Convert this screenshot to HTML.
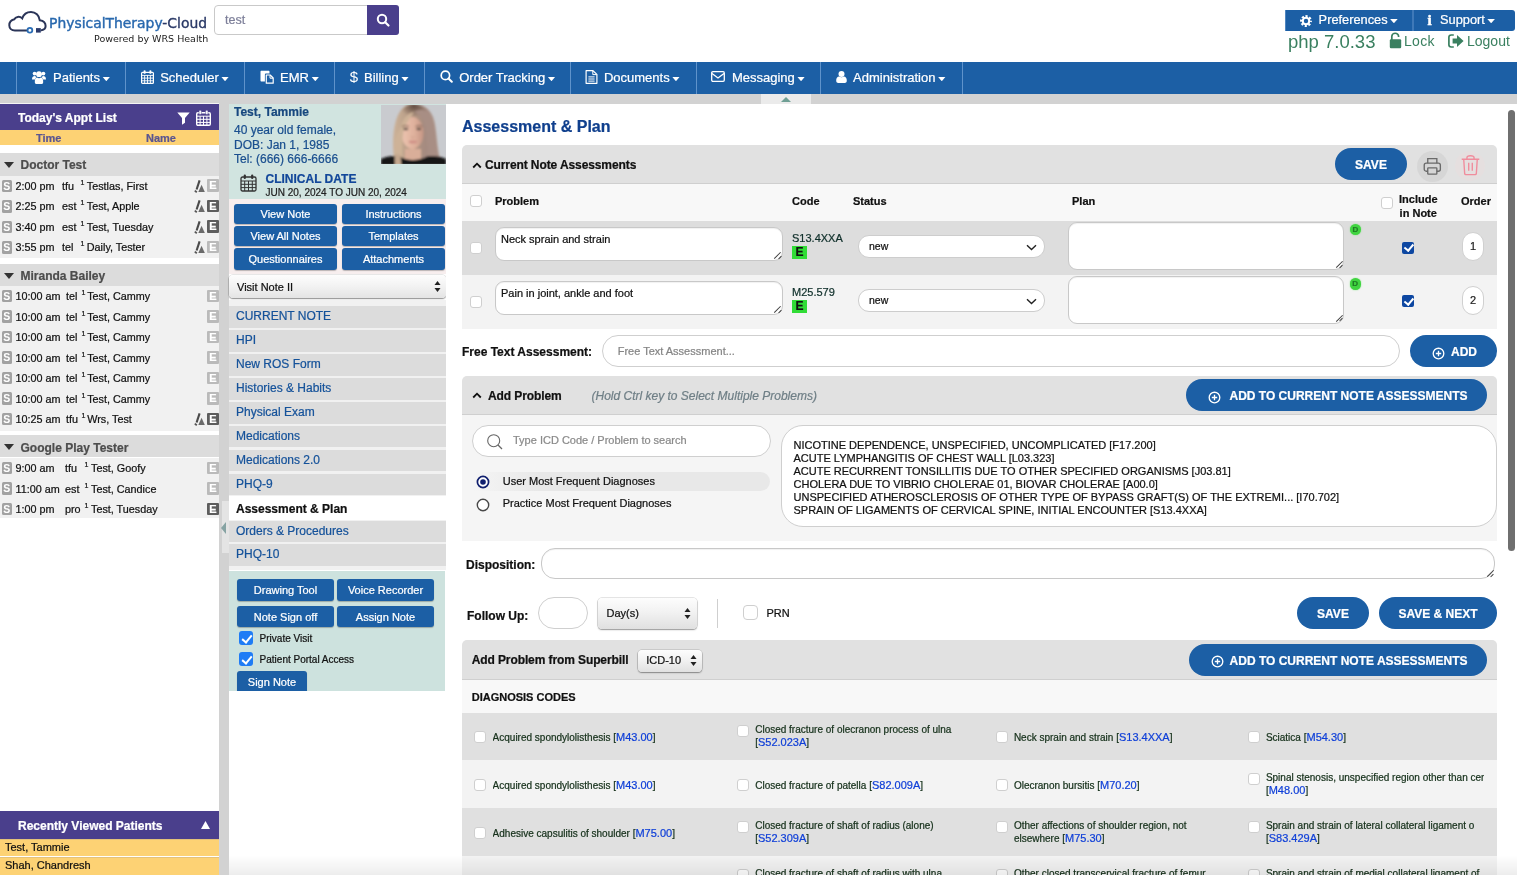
<!DOCTYPE html>
<html lang="en">
<head>
<meta charset="utf-8">
<title>PhysicalTherapy-Cloud - Assessment &amp; Plan</title>
<style>
*{box-sizing:border-box;margin:0;padding:0}
html,body{width:1523px;height:875px;overflow:hidden;background:#fff}
body>*{will-change:transform}
body{font-family:"Liberation Sans",Arial,Helvetica,sans-serif;font-size:12px;color:#111;position:relative;-webkit-text-stroke:0.22px currentColor}
.abs{position:absolute}
svg{display:block}
/* ---------- header ---------- */
#logo{position:absolute;left:0.8px;top:0;width:202px;height:40px}
#brand{position:absolute;left:49px;top:11.6px;font-family:'DejaVu Sans','Liberation Sans',sans-serif;font-size:13.9px;color:#2868ae;white-space:nowrap;line-height:22px;-webkit-text-stroke:0.4px #2868ae}
#brand b{font-weight:normal;color:#2b3a67;-webkit-text-stroke:0.35px #2b3a67}
#powered{position:absolute;left:93.7px;top:32px;font-family:'DejaVu Sans','Liberation Sans',sans-serif;font-size:9.5px;color:#222;white-space:nowrap;line-height:14px;-webkit-text-stroke:0}
#search{position:absolute;left:214px;top:5px;width:154px;height:30px;border:1px solid #c9c9c9;border-radius:4px 0 0 4px;background:#fff;font-size:12.5px;color:#7d7f99;line-height:28px;padding-left:10px}
#searchbtn{position:absolute;left:367px;top:5px;width:32px;height:30px;background:#4a3f8c;border-radius:0 3px 3px 0}
#pref{position:absolute;left:1285px;top:10px;width:230px;height:21px;background:#1c5fa5;border-radius:0 3px 3px 0;border-left:1px solid #4f86c0;color:#fff;font-size:12.8px;line-height:20.5px;white-space:nowrap}
#pref .sep{position:absolute;left:126px;top:0;width:2px;height:21px;background:#3f79b8}
#php{position:absolute;left:1288px;top:30px;font-size:18.5px;line-height:24px;color:#3a8060;white-space:nowrap;-webkit-text-stroke:0}
.toplink{position:absolute;top:32px;font-size:14px;line-height:18px;color:#3a8060;white-space:nowrap;-webkit-text-stroke:0}
/* ---------- nav ---------- */
#nav{position:absolute;left:0;top:62px;width:1517px;height:32px;background:#1c5fa5}
#nav{color:#fff;font-size:13px;line-height:31px;white-space:nowrap}
#nav .sp{position:absolute;top:0;width:1px;height:32px;background:#5f93cb}
#nav .t{position:absolute;top:0}
#nav .ni{position:absolute}
.caret{display:inline-block;width:7.6px;height:4.4px;background:#fff;clip-path:polygon(0 0,100% 0,50% 100%);vertical-align:middle;margin-left:2.5px;margin-top:1px}
#band{position:absolute;left:0;top:94px;width:1517px;height:10px;background:#d2d2d2}
#toggle{position:absolute;left:761px;top:94px;width:50px;height:10px;background:#ebebeb}
#toggle i{position:absolute;left:20px;top:3px;border-left:5px solid transparent;border-right:5px solid transparent;border-bottom:5px solid #6f9f94;width:0;height:0}
/* ---------- left sidebar ---------- */
#side{position:absolute;left:0;top:104px;width:219px;height:771px;background:#fff}
#gutter{position:absolute;left:219px;top:104px;width:10px;height:771px;background:#d2d2d2}
#appthead{position:absolute;left:0;top:0;width:219px;height:26px;background:#4a3f8c;color:#fff;font-weight:bold;font-size:12px;line-height:29.8px;padding-left:18px}
#apptcols{position:absolute;left:0;top:26px;width:219px;height:15px;background:#fdd274;color:#5a5590;font-weight:bold;font-size:11px;line-height:17px}
.grp{position:absolute;left:0;width:219px;height:23px;background:#dcdcdc;color:#4d4d4d;font-weight:bold;font-size:12px;line-height:24.5px;padding-left:20.5px}
.grp:before{content:"";position:absolute;left:4px;top:9px;border-left:5px solid transparent;border-right:5px solid transparent;border-top:6px solid #333}
.rbg{position:absolute;left:0;width:219px;background:#f1f1f1}
.row{position:absolute;left:0;width:219px;height:20px;font-size:10.8px;line-height:20px;color:#111;white-space:nowrap}
.row span{position:absolute;top:0}
.row sup{position:absolute;top:-3px;font-size:7px}
i{font-style:normal}
.si{position:absolute;left:1.5px;top:3.8px;width:10.4px;height:12.6px;background:#a2a2a2;border-radius:1.5px;color:#fff;font-weight:bold;font-size:10.5px;line-height:13px;text-align:center;-webkit-text-stroke:0}
.ei{position:absolute;left:207px;top:3.6px;width:12px;height:12.5px;background:#bababa;color:#fff;font-weight:bold;font-size:11px;line-height:13px;text-align:center;border-radius:1px}
.ei.d{background:#5d5d5d}
.ai{position:absolute;left:194px;top:4px;width:12px;height:13px}
#recent{position:absolute;left:0;top:707px;width:219px;height:28px;background:#4a3f8c;color:#fff;font-weight:bold;font-size:12px;line-height:30px;padding-left:18px}
.rv{position:absolute;left:0;width:219px;height:17px;background:#fdd274;font-size:11px;line-height:15.5px;padding-left:5px;color:#111;border-top:1px solid #e4c27a}

/* ---------- patient panel ---------- */
#pt{position:absolute;left:229px;top:104px;width:217px;height:95px;background:#d1e4e0}
#pt .nm{position:absolute;left:5px;top:0.7px;font-weight:bold;font-size:12px;line-height:15px;color:#17487f;white-space:nowrap}
#pt .ln{position:absolute;left:5px;font-size:12px;line-height:15px;color:#1a4f8f;white-space:nowrap}
#pt .cd{position:absolute;left:36.5px;top:67.5px;font-weight:bold;font-size:12px;line-height:14px;color:#12479a;white-space:nowrap}
#pt .dt{position:absolute;left:36.5px;top:82.6px;font-size:10px;line-height:12px;color:#222;white-space:nowrap}
#photo{position:absolute;left:381px;top:105px;width:65px;height:59px}
#btns{position:absolute;left:229px;top:199px;width:217px;height:75px;background:#f7eeee}
.bb{position:absolute;background:#1c5fa5;color:#fff;font-size:11px;line-height:21px;text-align:center;border-radius:3px;white-space:nowrap;box-shadow:0 1px 1px rgba(0,0,0,.25)}
#vsel{position:absolute;left:229px;top:275px;width:217px;height:23px;border-radius:4px;background:linear-gradient(#fdfdfd,#f2f2f2 50%,#e4e4e4);box-shadow:0 1px 1.5px rgba(0,0,0,.4),0 0 0 .6px rgba(0,0,0,.18);font-size:11px;line-height:25px;padding-left:8px;color:#111}
.ud{position:absolute;width:7px;height:11px}
#menu{position:absolute;left:229px;top:300px;width:218px;height:270px;background:#f1f1f1}
#menu div{position:absolute;left:0;width:218px;height:21.5px;background:#dcdcdc;color:#15529a;font-size:12px;line-height:21.2px;padding-left:7px;white-space:nowrap}
#menu div.act{background:#fff;color:#111;font-weight:bold;height:24px;line-height:26px}
#tools{position:absolute;left:229px;top:571px;width:216px;height:120px;background:#cde2de;overflow:hidden}
.cb{position:absolute;width:14px;height:14px;border-radius:3px;background:#1f7cf5}
.cb:after{content:"";position:absolute;left:4.5px;top:1.5px;width:4px;height:8px;border:solid #fff;border-width:0 2px 2px 0;transform:rotate(40deg)}
#tools .lb{position:absolute;left:30.6px;font-size:10px;line-height:15.4px;color:#111;white-space:nowrap}
#collapse{position:absolute;left:220.5px;top:521.5px;width:0;height:0;border-top:6px solid transparent;border-bottom:6px solid transparent;border-right:5.5px solid #86a3a3}

/* ---------- main ---------- */
#main{position:absolute;left:446px;top:104px;width:1071px;height:771px;background:#fff;overflow:hidden}
#main .abs{position:absolute}
h1{position:absolute;left:16px;top:12.8px;font-size:16px;line-height:20px;font-weight:bold;color:#0f3f8d;white-space:nowrap}
.sec{position:absolute;left:16px;width:1035px;background:#e1e1e1;border-radius:5px 5px 0 0;border-bottom:1px solid #cfcfcf}
.sec .tt{position:absolute;font-weight:bold;font-size:12px;color:#111;white-space:nowrap;line-height:16px;letter-spacing:-0.1px}
.band{position:absolute;left:16px;width:1035px}
.pill{position:absolute;background:#1c5fa5;color:#fff;font-weight:bold;font-size:12px;border-radius:16px;text-align:center;white-space:nowrap;letter-spacing:0}
.th{position:absolute;font-weight:bold;font-size:11px;line-height:14px;color:#111;white-space:nowrap;margin-top:-0.5px}
.ta{position:absolute;background:#fff;border:1px solid #c8c8c8;border-radius:9px;font-size:11px;line-height:14px;color:#111;padding:4px 5px;white-space:nowrap;box-shadow:inset 0 1px 1px rgba(0,0,0,.06)}
.ta:before{content:"";position:absolute;right:-0.6px;bottom:3.8px;width:8.8px;height:1.1px;background:#3c3c3c;transform:rotate(-45deg)}
.ta:after{content:"";position:absolute;right:-0.4px;bottom:2px;width:4.2px;height:1.1px;background:#3c3c3c;transform:rotate(-45deg)}
.ck{position:absolute;width:12px;height:12px;border:1px solid #cfcfcf;border-radius:3px;background:#fff}
.ckd{position:absolute;width:12px;height:12px;border-radius:2px;background:#0d47a1}
.ckd:after{content:"";position:absolute;left:3.8px;top:0.4px;width:3.5px;height:7px;border:solid #fff;border-width:0 2.1px 2.1px 0;transform:rotate(40deg)}
.code{position:absolute;font-size:11px;line-height:14px;color:#0f2f2a;white-space:nowrap}
.eb{position:absolute;width:15px;height:13px;background:#31dc36;color:#111;font-weight:bold;font-size:12px;line-height:13px;text-align:center}
.sel{position:absolute;height:22.6px;margin-top:-0.4px;background:#fff;border:1px solid #cdcdcd;border-radius:11px;font-size:10.5px;line-height:20px;color:#111;padding-left:10px}
.db{position:absolute;width:11.5px;height:11.5px;border-radius:6px;background:#40d440;color:#1f7a25;font-weight:bold;font-size:8px;line-height:12px;text-align:center;box-shadow:0 0 1.5px #6fe06f}
.ord{position:absolute;width:22.6px;height:29px;margin:-0.5px 0 0 -0.3px;border:1px solid #d0d0d0;border-radius:11.5px;background:#fff;font-size:11px;line-height:27px;text-align:center;color:#222}
.lbl{position:absolute;font-weight:bold;font-size:12px;line-height:16px;color:#111;white-space:nowrap;letter-spacing:0}
.inp{position:absolute;background:#fff;border:1px solid #cfcfcf;border-radius:16px;font-size:11px;color:#7a7a7a;white-space:nowrap}
.msel{position:absolute;border-radius:4px;background:linear-gradient(#fdfdfd,#f2f2f2 45%,#e0e0e0);box-shadow:0 1px 1.5px rgba(0,0,0,.35),0 0 0 .6px rgba(0,0,0,.2);font-size:11px;color:#111;white-space:nowrap}
.dx{position:absolute;font-size:10px;line-height:13px;color:#15301a;white-space:nowrap;overflow:hidden;margin-top:1.2px}
.dx a{font-size:11px;color:#0f3fd8;text-decoration:none;line-height:0}
#sb{position:absolute;left:1062px;top:6px;width:7px;height:441px;border-radius:4px;background:#6f6f6f}
</style>
</head>
<body>
<!-- header -->
<svg id="logo" viewBox="0 0 202 40">
  <path d="M25.5 30.5 H14 C10.5 30.5 8.3 28.3 8.3 25.3 C8.3 22.5 10.3 20 13.3 19.3 C14.5 16.7 18.6 15.8 21.2 18.4 C22.5 14.5 26 12 30 12 C34.5 12 38.3 15.5 38.8 20.3 C42 20.8 44.6 23 44.6 26 C44.6 28 43 29.8 40.5 30.3" fill="none" stroke="#2b3558" stroke-width="2" stroke-linecap="round"/>
  <circle cx="28.9" cy="30.2" r="2.4" fill="#fff" stroke="#2a6db5" stroke-width="1.8"/>
  <rect x="35" y="28.1" width="4.8" height="4.5" fill="#2b3a6b"/>
</svg>
<div id="brand">PhysicalTherapy<b>-Cloud</b></div>
<div id="powered">Powered by WRS Health</div>
<div id="search">test</div>
<div id="searchbtn"><svg width="32" height="30" viewBox="0 0 32 30"><circle cx="15" cy="14" r="4.2" fill="none" stroke="#fff" stroke-width="2"/><path d="M18.2 17.2 L21.5 20.5" stroke="#fff" stroke-width="2.2" stroke-linecap="round"/></svg></div>
<div id="pref">
  <svg class="abs" style="left:14px;top:4.5px" width="12" height="12" viewBox="0 0 16 16"><circle cx="8" cy="8" r="6.3" fill="none" stroke="#fff" stroke-width="3.2" stroke-dasharray="2.8 2.148" stroke-dashoffset="1.4"/><circle cx="8" cy="8" r="4.3" fill="none" stroke="#fff" stroke-width="2.7"/></svg>
  <span class="abs" style="left:32.6px;top:0">Preferences<i class="caret"></i></span>
  <div class="sep"></div>
  <span class="abs" style="left:141.6px;top:0;font-family:'Liberation Serif',serif;font-weight:bold;font-size:15px;-webkit-text-stroke:0.5px #fff">i</span>
  <span class="abs" style="left:154px;top:0">Support<i class="caret"></i></span>
</div>
<div id="php">php 7.0.33</div>
<svg class="abs" style="left:1389px;top:32px" width="13" height="17" viewBox="0 0 13 17"><path d="M2.8 8 V4.4 C2.8 0.2 9.6 0.2 9.6 4.4 V5" fill="none" stroke="#3a8060" stroke-width="1.7"/><rect x="0.8" y="7.3" width="11.4" height="8.9" rx="1.2" fill="#3a8060"/></svg>
<div class="toplink" style="left:1403.5px;letter-spacing:.3px">Lock</div>
<svg class="abs" style="left:1448px;top:34px" width="16" height="14" viewBox="0 0 16 14"><path d="M5.8 1 H3.2 C1.7 1 0.9 1.9 0.9 3.2 V10.8 C0.9 12.1 1.7 13 3.2 13 H5.8" fill="none" stroke="#3a8060" stroke-width="1.7"/><path d="M4.6 4.6 H9 V1 L15.6 7 L9 13 V9.4 H4.6 Z" fill="#3a8060"/></svg>
<div class="toplink" style="left:1467px">Logout</div>

<!-- nav -->
<div id="nav">
  <i class="sp" style="left:16.0px"></i>
  <svg class="ni" style="left:31.9px;top:7.5px" width="14" height="14" viewBox="0 0 14 14"><g fill="#fff"><circle cx="2.6" cy="3.6" r="1.9"/><circle cx="11.4" cy="3.6" r="1.9"/><path d="M0 9.5 C0 6.6 1.4 5.9 3.2 6 C3.6 6.6 4 7 4.4 7.2 C3.6 7.8 3.2 8.6 3.1 9.5 Z"/><path d="M14 9.5 C14 6.6 12.6 5.9 10.8 6 C10.4 6.6 10 7 9.6 7.2 C10.4 7.8 10.8 8.6 10.9 9.5 Z"/><circle cx="7" cy="4.2" r="2.9"/><path d="M2.9 13 C2.4 9.3 3.6 7.6 5 7.4 C6.2 8.4 7.8 8.4 9 7.4 C10.4 7.6 11.6 9.3 11.1 13 C10.8 13.7 10 14 9.4 14 H4.6 C4 14 3.2 13.7 2.9 13 Z"/></g></svg>
  <span class="t" style="left:53.0px">Patients<i class="caret"></i></span>
  <i class="sp" style="left:125.0px"></i>
  <svg class="ni" style="left:140.6px;top:7.5px" width="13" height="14" viewBox="0 0 13 14"><rect x="0.6" y="2.3" width="11.8" height="11.1" rx="1" fill="none" stroke="#fff" stroke-width="1.2"/><path d="M0.6 5.4 H12.4 M0.6 8.1 H12.4 M0.6 10.8 H12.4 M3.6 5.4 V13.4 M6.5 5.4 V13.4 M9.4 5.4 V13.4" stroke="#fff" stroke-width="0.9" fill="none"/><rect x="2.6" y="0.2" width="2" height="3.6" rx="0.9" fill="#fff"/><rect x="8.4" y="0.2" width="2" height="3.6" rx="0.9" fill="#fff"/></svg>
  <span class="t" style="left:160.2px">Scheduler<i class="caret"></i></span>
  <i class="sp" style="left:243.9px"></i>
  <svg class="ni" style="left:259.9px;top:7.5px" width="14" height="14" viewBox="0 0 14 14"><path d="M0.5 1.8 C0.5 1.2 0.9 0.8 1.5 0.8 H8.5 C9.1 0.8 9.5 1.2 9.5 1.8 V3.6 H6.2 C5.4 3.6 4.9 4.1 4.9 4.9 V11.6 H1.5 C0.9 11.6 0.5 11.2 0.5 10.6 Z" fill="#fff"/><path d="M6.3 5 H10.2 L13.2 8 V13.2 H6.3 Z" fill="none" stroke="#fff" stroke-width="1.2" stroke-linejoin="round"/><path d="M10 5.2 V8.2 H13" fill="none" stroke="#fff" stroke-width="1"/></svg>
  <span class="t" style="left:280.1px">EMR<i class="caret"></i></span>
  <i class="sp" style="left:333.7px"></i>
  <span class="ni" style="left:349.7px;top:0;font-size:15px;line-height:30.5px;-webkit-text-stroke:0">$</span>
  <span class="t" style="left:364.0px">Billing<i class="caret"></i></span>
  <i class="sp" style="left:424.0px"></i>
  <svg class="ni" style="left:440px;top:8.0px" width="13" height="13" viewBox="0 0 13 13"><circle cx="5.4" cy="5.4" r="4.2" fill="none" stroke="#fff" stroke-width="1.7"/><path d="M8.5 8.5 L11.8 11.8" stroke="#fff" stroke-width="2" stroke-linecap="round"/></svg>
  <span class="t" style="left:459.2px">Order Tracking<i class="caret"></i></span>
  <i class="sp" style="left:570.2px"></i>
  <svg class="ni" style="left:584.8px;top:7.5px" width="13" height="14" viewBox="0 0 13 14"><path d="M1.1 0.7 H8 L11.9 4.4 V13.3 H1.1 Z" fill="none" stroke="#fff" stroke-width="1.2" stroke-linejoin="round"/><path d="M7.8 0.9 V4.6 H11.7 M3.4 6.9 H9.6 M3.4 9 H9.6 M3.4 11.1 H9.6" fill="none" stroke="#fff" stroke-width="1"/></svg>
  <span class="t" style="left:603.9px">Documents<i class="caret"></i></span>
  <i class="sp" style="left:696.1px"></i>
  <svg class="ni" style="left:711px;top:9.0px" width="14" height="11" viewBox="0 0 14 11"><rect x="0.7" y="0.7" width="12.6" height="9.6" rx="1.2" fill="none" stroke="#fff" stroke-width="1.3"/><path d="M1 2.6 L7 7 L13 2.6" fill="none" stroke="#fff" stroke-width="1.3"/></svg>
  <span class="t" style="left:731.9px">Messaging<i class="caret"></i></span>
  <i class="sp" style="left:820.3px"></i>
  <svg class="ni" style="left:835.6px;top:8.5px" width="11" height="12" viewBox="0 0 11 12"><circle cx="5.5" cy="3" r="3" fill="#fff"/><path d="M0.2 10 C0 7 1.4 5.4 3.1 5.4 C4.5 6.5 6.5 6.5 7.9 5.4 C9.6 5.4 11 7 10.8 10 C10.7 11.2 9.9 12 8.8 12 H2.2 C1.1 12 0.3 11.2 0.2 10 Z" fill="#fff"/></svg>
  <span class="t" style="left:853.1px">Administration<i class="caret"></i></span>
  <i class="sp" style="left:962.0px"></i>
</div>
<div id="band"></div>
<div id="toggle"><i></i></div>

<!-- SIDEBAR -->
<div id="side">
  <div id="appthead">Today's Appt List<svg class="abs" style="left:177px;top:8px" width="13" height="13" viewBox="0 0 13 13"><path d="M0.3 0.5 H12.7 L8 6 V10.8 L5 12.8 V6 Z" fill="#fff"/></svg><svg class="abs" style="left:196px;top:6px" width="15" height="16" viewBox="0 0 15 16"><rect x="0.7" y="2.7" width="13.6" height="12.6" rx="1.2" fill="none" stroke="#fff" stroke-width="1.4"/><path d="M0.7 6.2 H14.3 M0.7 9.3 H14.3 M0.7 12.4 H14.3 M4.1 6.2 V15.3 M7.5 6.2 V15.3 M10.9 6.2 V15.3" stroke="#fff" stroke-width="1" fill="none"/><rect x="3" y="0.2" width="2.4" height="4.3" rx="1.1" fill="#fff" stroke="#4a3f8c" stroke-width="0.5"/><rect x="9.6" y="0.2" width="2.4" height="4.3" rx="1.1" fill="#fff" stroke="#4a3f8c" stroke-width="0.5"/></svg></div>
  <div id="apptcols"><span class="abs" style="left:36px">Time</span><span class="abs" style="left:146px">Name</span></div>
<!--SR0-->
  <div class="grp" style="top:49.2px;height:22.8px">Doctor Test</div>
  <div class="rbg" style="top:72.0px;height:82.2px"></div>
  <div class="row" style="top:71.8px"><i class="si">S</i><span style="left:15.6px">2:00 pm</span><span style="left:62px">tfu</span><sup style="left:80.6px">1</sup><span style="left:86.8px">Testlas, First</span><svg class="ai" viewBox="0 0 12 13"><path d="M5.6 0.3 L2.6 9.5" stroke="#4a4a4a" stroke-width="2.1" fill="none"/><path d="M7.6 4.8 L10.8 12 H4.3 Z" fill="#6a6a6a"/><path d="M0.8 10.6 L2.8 12.2" stroke="#555" stroke-width="1.8"/></svg><i class="ei">E</i></div>
  <div class="row" style="top:92.3px"><i class="si">S</i><span style="left:15.6px">2:25 pm</span><span style="left:62px">est</span><sup style="left:80.6px">1</sup><span style="left:86.8px">Test, Apple</span><svg class="ai" viewBox="0 0 12 13"><path d="M5.6 0.3 L2.6 9.5" stroke="#4a4a4a" stroke-width="2.1" fill="none"/><path d="M7.6 4.8 L10.8 12 H4.3 Z" fill="#6a6a6a"/><path d="M0.8 10.6 L2.8 12.2" stroke="#555" stroke-width="1.8"/></svg><i class="ei d">E</i></div>
  <div class="row" style="top:112.8px"><i class="si">S</i><span style="left:15.6px">3:40 pm</span><span style="left:62px">est</span><sup style="left:80.6px">1</sup><span style="left:86.8px">Test, Tuesday</span><svg class="ai" viewBox="0 0 12 13"><path d="M5.6 0.3 L2.6 9.5" stroke="#4a4a4a" stroke-width="2.1" fill="none"/><path d="M7.6 4.8 L10.8 12 H4.3 Z" fill="#6a6a6a"/><path d="M0.8 10.6 L2.8 12.2" stroke="#555" stroke-width="1.8"/></svg><i class="ei d">E</i></div>
  <div class="row" style="top:133.3px"><i class="si">S</i><span style="left:15.6px">3:55 pm</span><span style="left:62px">tel</span><sup style="left:80.6px">1</sup><span style="left:86.8px">Daily, Tester</span><svg class="ai" viewBox="0 0 12 13"><path d="M5.6 0.3 L2.6 9.5" stroke="#4a4a4a" stroke-width="2.1" fill="none"/><path d="M7.6 4.8 L10.8 12 H4.3 Z" fill="#6a6a6a"/><path d="M0.8 10.6 L2.8 12.2" stroke="#555" stroke-width="1.8"/></svg><i class="ei">E</i></div>
  <div class="grp" style="top:160.0px;height:22px">Miranda Bailey</div>
  <div class="rbg" style="top:182.0px;height:145.0px"></div>
  <div class="row" style="top:182.1px"><i class="si">S</i><span style="left:15.6px">10:00 am</span><span style="left:66px">tel</span><sup style="left:81.6px">1</sup><span style="left:87.2px">Test, Cammy</span><i class="ei">E</i></div>
  <div class="row" style="top:202.6px"><i class="si">S</i><span style="left:15.6px">10:00 am</span><span style="left:66px">tel</span><sup style="left:81.6px">1</sup><span style="left:87.2px">Test, Cammy</span><i class="ei">E</i></div>
  <div class="row" style="top:223.1px"><i class="si">S</i><span style="left:15.6px">10:00 am</span><span style="left:66px">tel</span><sup style="left:81.6px">1</sup><span style="left:87.2px">Test, Cammy</span><i class="ei">E</i></div>
  <div class="row" style="top:243.6px"><i class="si">S</i><span style="left:15.6px">10:00 am</span><span style="left:66px">tel</span><sup style="left:81.6px">1</sup><span style="left:87.2px">Test, Cammy</span><i class="ei">E</i></div>
  <div class="row" style="top:264.1px"><i class="si">S</i><span style="left:15.6px">10:00 am</span><span style="left:66px">tel</span><sup style="left:81.6px">1</sup><span style="left:87.2px">Test, Cammy</span><i class="ei">E</i></div>
  <div class="row" style="top:284.6px"><i class="si">S</i><span style="left:15.6px">10:00 am</span><span style="left:66px">tel</span><sup style="left:81.6px">1</sup><span style="left:87.2px">Test, Cammy</span><i class="ei">E</i></div>
  <div class="row" style="top:305.1px"><i class="si">S</i><span style="left:15.6px">10:25 am</span><span style="left:66px">tfu</span><sup style="left:81.6px">1</sup><span style="left:87.2px">Wrs, Test</span><svg class="ai" viewBox="0 0 12 13"><path d="M5.6 0.3 L2.6 9.5" stroke="#4a4a4a" stroke-width="2.1" fill="none"/><path d="M7.6 4.8 L10.8 12 H4.3 Z" fill="#6a6a6a"/><path d="M0.8 10.6 L2.8 12.2" stroke="#555" stroke-width="1.8"/></svg><i class="ei d">E</i></div>
  <div class="grp" style="top:330.8px;height:22.7px;line-height:26.4px">Google Play Tester</div>
  <div class="rbg" style="top:353.5px;height:60.5px"></div>
  <div class="row" style="top:354.1px"><i class="si">S</i><span style="left:15.6px">9:00 am</span><span style="left:65px">tfu</span><sup style="left:84.6px">1</sup><span style="left:91px">Test, Goofy</span><i class="ei">E</i></div>
  <div class="row" style="top:374.6px"><i class="si">S</i><span style="left:15.6px">11:00 am</span><span style="left:65px">est</span><sup style="left:84.6px">1</sup><span style="left:91px">Test, Candice</span><i class="ei">E</i></div>
  <div class="row" style="top:395.1px"><i class="si">S</i><span style="left:15.6px">1:00 pm</span><span style="left:65px">pro</span><sup style="left:84.6px">1</sup><span style="left:91px">Test, Tuesday</span><i class="ei d">E</i></div>
<!--SR1-->
  <div id="recent">Recently Viewed Patients<svg class="abs" style="left:201px;top:10px" width="9" height="8" viewBox="0 0 9 8"><path d="M4.5 0 L9 8 H0 Z" fill="#fff"/></svg></div>
  <div class="rv" style="top:735px">Test, Tammie</div>
  <div class="rv" style="top:753px;height:18px">Shah, Chandresh</div>
</div>
<div id="gutter"></div>
<div style="position:absolute;left:0;top:103px;width:219px;height:1px;background:#f4f4f4"></div>
<div id="pt">
  <div class="nm">Test, Tammie</div>
  <div class="ln" style="top:18.8px">40 year old female,</div>
  <div class="ln" style="top:33.5px">DOB: Jan 1, 1985</div>
  <div class="ln" style="top:48.4px">Tel: (666) 666-6666</div>
  <svg class="abs" style="left:11px;top:70px" width="17" height="18" viewBox="0 0 17 18"><rect x="1" y="3" width="15" height="14" rx="1.5" fill="none" stroke="#333" stroke-width="1.3"/><path d="M1 7 H16 M1 10.3 H16 M1 13.6 H16 M4.7 7 V17 M8.5 7 V17 M12.3 7 V17" stroke="#333" stroke-width="1"/><rect x="3.7" y="0.5" width="2.2" height="4.5" rx="1" fill="#333"/><rect x="11.1" y="0.5" width="2.2" height="4.5" rx="1" fill="#333"/></svg>
  <div class="cd">CLINICAL DATE</div>
  <div class="dt">JUN 20, 2024 TO JUN 20, 2024</div>
</div>
<svg id="photo" viewBox="0 0 65 59" preserveAspectRatio="none">
  <defs>
    <linearGradient id="hg" x1="0" y1="0" x2="1" y2="0"><stop offset="0" stop-color="#cdb399"/><stop offset=".4" stop-color="#b39883"/><stop offset=".7" stop-color="#a48a80"/><stop offset="1" stop-color="#b39a8c"/></linearGradient>
    <radialGradient id="rt" cx="0.5" cy="0.1" r="0.6"><stop offset="0" stop-color="#5f4a40"/><stop offset="1" stop-color="#5f4a40" stop-opacity="0"/></radialGradient>
    <linearGradient id="fg" x1="0" y1="0" x2="1" y2="0"><stop offset="0" stop-color="#ecc4b0"/><stop offset=".6" stop-color="#deb09b"/><stop offset="1" stop-color="#c49584"/></linearGradient>
    <filter id="bl" x="-20%" y="-20%" width="140%" height="140%"><feGaussianBlur stdDeviation="1"/></filter>
  </defs>
  <rect width="65" height="59" fill="#c9cbcf"/>
  <g filter="url(#bl)">
    <path d="M14 60 C11 44 11 22 17 10 C22 0 27 -1 33 -1 C42 -1 48 3 52 12 C56 22 55 38 59 54 L59 60 Z" fill="url(#hg)"/>
    <ellipse cx="33" cy="8" rx="12" ry="9" fill="url(#rt)"/>
    <path d="M24 44 H40 V56 H24 Z" fill="#d9ae99"/>
    <ellipse cx="31.5" cy="28" rx="11" ry="16" fill="url(#fg)"/>
    <path d="M20 22 C22 12 28 8 33 7 C30 12 26 16 23 24 C21 32 21 44 22 60 H14 C12 46 13 32 20 22 Z" fill="#ceb297"/>
    <path d="M33 7 C40 9 44 16 45 26 C46 38 47 48 50 56 L58 56 C55 42 56 24 50 12 C46 5 40 3 33 7 Z" fill="#a88e84"/>
    <path d="M0 60 V54 C5 51.5 12 50.5 19 51.5 C25 56 38 56 46 51.5 C53 50.5 60 51.5 65 54 V60 Z" fill="#121517"/>
    <path d="M14 60 C13.5 56 13.5 52 14 49 L20 50 C19.5 54 20 57 20.5 60 Z" fill="#c4a78e"/>
    <path d="M21 21.5 C23 20.3 26 20.3 28 21.5 M34.5 21.5 C36.5 20.3 39.5 20.3 41.5 21.5" stroke="#7a5f50" stroke-width="1" fill="none"/>
    <ellipse cx="24.8" cy="24" rx="2.6" ry="1.2" fill="#5e5147"/>
    <ellipse cx="37.8" cy="24" rx="2.6" ry="1.2" fill="#5e5147"/>
    <path d="M30 31.5 C30.5 33 32.5 33 33.5 31.5" stroke="#c99583" stroke-width="0.9" fill="none"/>
    <ellipse cx="31.8" cy="37" rx="4.2" ry="1.4" fill="#cf8f86"/>
  </g>
</svg>
<div id="btns">
  <div class="bb" style="left:5px;top:5px;width:103px;height:20px">View Note</div>
  <div class="bb" style="left:113px;top:5px;width:103px;height:20px">Instructions</div>
  <div class="bb" style="left:5px;top:27px;width:103px;height:20px">View All Notes</div>
  <div class="bb" style="left:113px;top:27px;width:103px;height:20px">Templates</div>
  <div class="bb" style="left:5px;top:49px;width:103px;height:22px;line-height:23px">Questionnaires</div>
  <div class="bb" style="left:113px;top:49px;width:103px;height:22px;line-height:23px">Attachments</div>
</div>
<div id="vsel">Visit Note II<svg class="ud" style="left:205px;top:6px" viewBox="0 0 7 11"><path d="M3.5 0 L6.5 4 H0.5 Z M3.5 11 L6.5 7 H0.5 Z" fill="#222"/></svg></div>
<div id="menu">
  <div style="top:6.4px">CURRENT NOTE</div>
  <div style="top:30.3px">HPI</div>
  <div style="top:54.2px">New ROS Form</div>
  <div style="top:78.1px">Histories &amp; Habits</div>
  <div style="top:102px">Physical Exam</div>
  <div style="top:125.9px">Medications</div>
  <div style="top:149.8px">Medications 2.0</div>
  <div style="top:173.7px">PHQ-9</div>
  <div class="act" style="top:196px">Assessment &amp; Plan</div>
  <div style="top:220.5px">Orders &amp; Procedures</div>
  <div style="top:244.4px">PHQ-10</div>
</div>
<div style="position:absolute;left:222px;top:501px;width:7px;height:52px;background:#e4e4e4"></div>
<div id="collapse"></div>
<div id="tools">
  <div class="bb" style="left:8px;top:8px;width:97px;height:22px;line-height:22px">Drawing Tool</div>
  <div class="bb" style="left:108px;top:8px;width:97px;height:22px;line-height:22px">Voice Recorder</div>
  <div class="bb" style="left:8px;top:35px;width:97px;height:20.5px;line-height:22px">Note Sign off</div>
  <div class="bb" style="left:108px;top:35px;width:97px;height:20.5px;line-height:22px">Assign Note</div>
  <i class="cb" style="left:10px;top:60px"></i><span class="lb" style="top:60px">Private Visit</span>
  <i class="cb" style="left:10px;top:81px"></i><span class="lb" style="top:81px">Patient Portal Access</span>
  <div class="bb" style="left:8px;top:100px;width:70px;height:24px;line-height:23px">Sign Note</div>
</div>

<div id="main">
<h1>Assessment &amp; Plan</h1>
<div class="sec" style="top:41px;height:39px"><svg class="abs" style="left:9.5px;top:16.5px" width="10" height="7" viewBox="0 0 10 7"><path d="M1.2 5.5 L5 1.7 L8.8 5.5" fill="none" stroke="#111" stroke-width="1.8"/></svg><span class="tt" style="left:23px;top:12px">Current Note Assessments</span><div class="pill" style="left:873px;top:3.4px;width:72px;height:32px;line-height:34px">SAVE</div><div class="abs" style="left:954.5px;top:5.5px;width:31px;height:31px;border-radius:16px;background:#d6d6d6"></div><svg class="abs" style="left:961.3px;top:11.7px" width="18.6" height="18.6" viewBox="0 0 18 18"><path d="M4.6 6 V1.6 H13.4 V6" fill="none" stroke="#6a6a6a" stroke-width="1.3"/><rect x="1.2" y="6" width="15.6" height="7.8" rx="2" fill="none" stroke="#6a6a6a" stroke-width="1.3"/><rect x="4.6" y="10.6" width="8.8" height="6" rx="0.6" fill="#d6d6d6" stroke="#6a6a6a" stroke-width="1.3"/></svg><div class="abs" style="left:993px;top:6px;width:30px;height:30px;border-radius:15px;background:#e5dfdf"></div><svg class="abs" style="left:998.9px;top:9.4px" width="19" height="21.4" viewBox="0 0 16 18"><path d="M0.6 4.4 H15.4 M5 4.4 V3 C5 0.9 11 0.9 11 3 V4.4 M2.3 4.4 L3.1 16.6 C3.2 17.2 3.6 17.4 4 17.4 H12 C12.4 17.4 12.8 17.2 12.9 16.6 L13.7 4.4 M6.5 7.4 V14 M9.5 7.4 V14" fill="none" stroke="#f08c9c" stroke-width="1.15"/></svg></div>
<div class="band" style="top:80px;height:37px;background:#f8f8f8"></div>
<div class="band" style="top:117px;height:53.5px;background:#dddddd"></div>
<div class="band" style="top:170.5px;height:54px;background:#f3f3f3"></div>
<i class="ck" style="left:24px;top:91px"></i>
<span class="th" style="left:49px;top:90px">Problem</span>
<span class="th" style="left:346px;top:90px">Code</span>
<span class="th" style="left:407px;top:90px">Status</span>
<span class="th" style="left:626px;top:90px">Plan</span>
<i class="ck" style="left:935px;top:92.5px"></i>
<span class="th" style="left:953px;top:88px;line-height:14.5px;text-align:center">Include<br>in Note</span>
<span class="th" style="left:1015px;top:90px">Order</span>
<i class="ck" style="left:24px;top:138.0px"></i>
<div class="ta" style="left:49px;top:123.4px;width:287.6px;height:33.6px">Neck sprain and strain</div>
<span class="code" style="left:346px;top:127.4px">S13.4XXA</span>
<span class="eb" style="left:346px;top:142.3px">E</span>
<div class="sel" style="left:412px;top:131.7px;width:187px">new<svg class="abs" style="left:167px;top:8px" width="11" height="7" viewBox="0 0 11 7"><path d="M1 1.2 L5.5 5.5 L10 1.2" fill="none" stroke="#222" stroke-width="1.4"/></svg></div>
<div class="ta" style="left:622px;top:118.4px;width:276px;height:47.4px"></div>
<span class="db" style="left:903.7px;top:119.7px">D</span>
<i class="ckd" style="left:956px;top:137.6px"></i>
<div class="ord" style="left:1016px;top:128.3px">1</div>
<i class="ck" style="left:24px;top:191.7px"></i>
<div class="ta" style="left:49px;top:177.1px;width:287.6px;height:34.2px">Pain in joint, ankle and foot</div>
<span class="code" style="left:346px;top:180.8px">M25.579</span>
<span class="eb" style="left:346px;top:196.0px">E</span>
<div class="sel" style="left:412px;top:185.4px;width:187px">new<svg class="abs" style="left:167px;top:8px" width="11" height="7" viewBox="0 0 11 7"><path d="M1 1.2 L5.5 5.5 L10 1.2" fill="none" stroke="#222" stroke-width="1.4"/></svg></div>
<div class="ta" style="left:622px;top:171.5px;width:276px;height:48px"></div>
<span class="db" style="left:903.5px;top:174.1px">D</span>
<i class="ckd" style="left:956px;top:191.3px"></i>
<div class="ord" style="left:1016px;top:182.0px">2</div>
<span class="lbl" style="left:16px;top:240px">Free Text Assessment:</span>
<div class="inp" style="left:155.7px;top:231.2px;width:798px;height:32px;line-height:30.5px;padding-left:15px;color:#858585">Free Text Assessment...</div>
<div class="pill" style="left:964px;top:231.2px;width:87px;height:32px;line-height:34.6px;padding-left:21px"><svg class="abs" style="left:22px;top:11.8px" width="13" height="13" viewBox="0 0 13 13"><circle cx="6.5" cy="6.5" r="5.3" fill="none" stroke="#fff" stroke-width="1.35"/><path d="M6.5 3.8 V9.2 M3.8 6.5 H9.2" stroke="#fff" stroke-width="1.35"/></svg>ADD</div>
<div class="sec" style="top:271.5px;height:39.5px"><svg class="abs" style="left:9.5px;top:16.5px" width="10" height="7" viewBox="0 0 10 7"><path d="M1.2 5.5 L5 1.7 L8.8 5.5" fill="none" stroke="#111" stroke-width="1.8"/></svg><span class="tt" style="left:26px;top:12px">Add Problem</span><span class="abs" style="left:129.5px;top:12px;font-style:italic;font-size:12px;line-height:16px;color:#6f7f86;white-space:nowrap">(Hold Ctrl key to Select Multiple Problems)</span><div class="pill" style="left:723.5px;top:3.5px;width:301.5px;height:32px;line-height:34px;padding-left:24.5px"><svg class="abs" style="left:22px;top:11.8px" width="13" height="13" viewBox="0 0 13 13"><circle cx="6.5" cy="6.5" r="5.3" fill="none" stroke="#fff" stroke-width="1.35"/><path d="M6.5 3.8 V9.2 M3.8 6.5 H9.2" stroke="#fff" stroke-width="1.35"/></svg>ADD TO CURRENT NOTE ASSESSMENTS</div></div>
<div class="band" style="top:311px;height:125.5px;background:#f5f5f5"></div>
<div class="inp" style="left:26px;top:321px;width:298.5px;height:31.6px;line-height:29px;padding-left:40px;color:#8a8a8a"><svg class="abs" style="left:13px;top:7px" width="18" height="18" viewBox="0 0 18 18"><circle cx="7.7" cy="7.7" r="6" fill="none" stroke="#666" stroke-width="1.1"/><path d="M12 12 L16 16" stroke="#666" stroke-width="1.2"/></svg>Type ICD Code / Problem to search</div>
<div class="abs" style="left:28px;top:368px;width:296px;height:19px;background:linear-gradient(to right,rgba(231,231,231,0),#e8e8e8 22%);border-radius:0 10px 10px 0"></div>
<svg class="abs" style="left:29.7px;top:370.8px" width="14" height="14" viewBox="0 0 14 14"><circle cx="7" cy="7" r="5.6" fill="#fff" stroke="#101f6e" stroke-width="1.7"/><circle cx="7" cy="7" r="2.8" fill="#101f6e"/></svg>
<span class="abs" style="left:56.7px;top:369.6px;font-size:11px;line-height:14px;white-space:nowrap">User Most Frequent Diagnoses</span>
<svg class="abs" style="left:29.7px;top:394.1px" width="14" height="14" viewBox="0 0 14 14"><circle cx="7" cy="7" r="5.7" fill="#fff" stroke="#484848" stroke-width="1.4"/></svg>
<span class="abs" style="left:56.7px;top:392.4px;font-size:11px;line-height:14px;white-space:nowrap">Practice Most Frequent Diagnoses</span>
<div class="abs" style="left:335px;top:321.2px;width:716px;height:101.4px;background:#fff;border:1px solid #cfcfcf;border-radius:22px;padding:12.9px 0 0 11.5px;font-size:11px;line-height:12.9px;color:#111;white-space:nowrap">NICOTINE DEPENDENCE, UNSPECIFIED, UNCOMPLICATED [F17.200]<br>ACUTE LYMPHANGITIS OF CHEST WALL [L03.323]<br>ACUTE RECURRENT TONSILLITIS DUE TO OTHER SPECIFIED ORGANISMS [J03.81]<br>CHOLERA DUE TO VIBRIO CHOLERAE 01, BIOVAR CHOLERAE [A00.0]<br>UNSPECIFIED ATHEROSCLEROSIS OF OTHER TYPE OF BYPASS GRAFT(S) OF THE EXTREMI... [I70.702]<br>SPRAIN OF LIGAMENTS OF CERVICAL SPINE, INITIAL ENCOUNTER [S13.4XXA]</div>
<span class="lbl" style="left:20px;top:452.5px">Disposition:</span>
<div class="ta" style="left:95.4px;top:444.2px;width:953.5px;height:31px;border-radius:14px"></div>
<span class="lbl" style="left:21px;top:503.5px">Follow Up:</span>
<div class="inp" style="left:91.7px;top:493.3px;width:50px;height:31.6px"></div>
<div class="msel" style="left:152px;top:494px;width:99px;height:31px;line-height:30px;padding-left:8.5px">Day(s)<svg class="abs" style="left:85.5px;top:10px" width="7" height="11" viewBox="0 0 7 11"><path d="M3.5 0 L6.5 4 H0.5 Z M3.5 11 L6.5 7 H0.5 Z" fill="#222"/></svg></div>
<div class="abs" style="left:271px;top:495px;width:1px;height:29px;background:#cfcfcf"></div>
<i class="ck" style="left:296.5px;top:501px;width:15px;height:15px;border-radius:4px"></i>
<span class="abs" style="left:320.5px;top:502px;font-size:11px;line-height:14px">PRN</span>
<div class="pill" style="left:851px;top:493px;width:72px;height:32px;line-height:34.4px">SAVE</div>
<div class="pill" style="left:933px;top:493px;width:118px;height:32px;line-height:34.4px">SAVE &amp; NEXT</div>
<div class="sec" style="top:535.7px;height:40px"><span class="tt" style="left:9.7px;top:12.5px">Add Problem from Superbill</span><div class="msel" style="left:176.2px;top:10px;width:64px;height:22px;line-height:21px;padding-left:8px">ICD-10<svg class="abs" style="left:52px;top:5.5px" width="7" height="11" viewBox="0 0 7 11"><path d="M3.5 0 L6.5 4 H0.5 Z M3.5 11 L6.5 7 H0.5 Z" fill="#222"/></svg></div><div class="pill" style="left:726.6px;top:4.3px;width:298.5px;height:32px;line-height:34px;padding-left:21.5px"><svg class="abs" style="left:22px;top:11px" width="13" height="13" viewBox="0 0 13 13"><circle cx="6.5" cy="6.5" r="5.3" fill="none" stroke="#fff" stroke-width="1.35"/><path d="M6.5 3.8 V9.2 M3.8 6.5 H9.2" stroke="#fff" stroke-width="1.35"/></svg>ADD TO CURRENT NOTE ASSESSMENTS</div></div>
<div class="band" style="top:575.7px;height:33px;background:#f8f8f8"></div>
<span class="th" style="left:25.7px;top:585.5px;margin-top:0.3px">DIAGNOSIS CODES</span>
<div class="band" style="top:608.6px;height:48px;background:#e0e0e0"></div>
<i class="ck" style="left:28.2px;top:626.9px"></i>
<div class="dx" style="left:46.6px;top:626.05px;width:235px">Acquired spondylolisthesis [<a>M43.00</a>]</div>
<i class="ck" style="left:290.8px;top:621.0px"></i>
<div class="dx" style="left:309.2px;top:618.30px;width:235px">Closed fracture of olecranon process of ulna<br>[<a>S52.023A</a>]</div>
<i class="ck" style="left:549.6px;top:626.9px"></i>
<div class="dx" style="left:567.9px;top:626.05px;width:235px">Neck sprain and strain [<a>S13.4XXA</a>]</div>
<i class="ck" style="left:801.6px;top:626.9px"></i>
<div class="dx" style="left:819.9px;top:626.05px;width:218px">Sciatica [<a>M54.30</a>]</div>
<div class="band" style="top:656.4px;height:48px;background:#f3f3f3"></div>
<i class="ck" style="left:28.2px;top:674.7px"></i>
<div class="dx" style="left:46.6px;top:673.85px;width:235px">Acquired spondylolisthesis [<a>M43.00</a>]</div>
<i class="ck" style="left:290.8px;top:674.7px"></i>
<div class="dx" style="left:309.2px;top:673.85px;width:235px">Closed fracture of patella [<a>S82.009A</a>]</div>
<i class="ck" style="left:549.6px;top:674.7px"></i>
<div class="dx" style="left:567.9px;top:673.85px;width:235px">Olecranon bursitis [<a>M70.20</a>]</div>
<i class="ck" style="left:801.6px;top:668.8px"></i>
<div class="dx" style="left:819.9px;top:666.10px;width:218px">Spinal stenosis, unspecified region other than cer<br>[<a>M48.00</a>]</div>
<div class="band" style="top:704.4px;height:48px;background:#e0e0e0"></div>
<i class="ck" style="left:28.2px;top:722.7px"></i>
<div class="dx" style="left:46.6px;top:721.85px;width:235px">Adhesive capsulitis of shoulder [<a>M75.00</a>]</div>
<i class="ck" style="left:290.8px;top:716.8px"></i>
<div class="dx" style="left:309.2px;top:714.10px;width:235px">Closed fracture of shaft of radius (alone)<br>[<a>S52.309A</a>]</div>
<i class="ck" style="left:549.6px;top:716.8px"></i>
<div class="dx" style="left:567.9px;top:714.10px;width:235px">Other affections of shoulder region, not<br>elsewhere [<a>M75.30</a>]</div>
<i class="ck" style="left:801.6px;top:716.8px"></i>
<div class="dx" style="left:819.9px;top:714.10px;width:218px">Sprain and strain of lateral collateral ligament o<br>[<a>S83.429A</a>]</div>
<div class="band" style="top:752.2px;height:48px;background:#f3f3f3"></div>
<i class="ck" style="left:28.2px;top:770.5px"></i>
<div class="dx" style="left:46.6px;top:769.65px;width:235px">Bicipital tenosynovitis [<a>M75.20</a>]</div>
<i class="ck" style="left:290.8px;top:764.6px"></i>
<div class="dx" style="left:309.2px;top:761.90px;width:235px">Closed fracture of shaft of radius with ulna<br>[<a>S52.209A</a>]</div>
<i class="ck" style="left:549.6px;top:764.6px"></i>
<div class="dx" style="left:567.9px;top:761.90px;width:235px">Other closed transcervical fracture of femur<br>[<a>S72.009A</a>]</div>
<i class="ck" style="left:801.6px;top:764.6px"></i>
<div class="dx" style="left:819.9px;top:761.90px;width:218px">Sprain and strain of medial collateral ligament of<br>[<a>S83.419A</a>]</div>
<div id="sb"></div>
</div>
<div style="position:absolute;left:229px;top:855px;width:1288px;height:20px;background:linear-gradient(rgba(0,0,0,0),rgba(0,0,0,0.07));pointer-events:none"></div>
</body>
</html>
